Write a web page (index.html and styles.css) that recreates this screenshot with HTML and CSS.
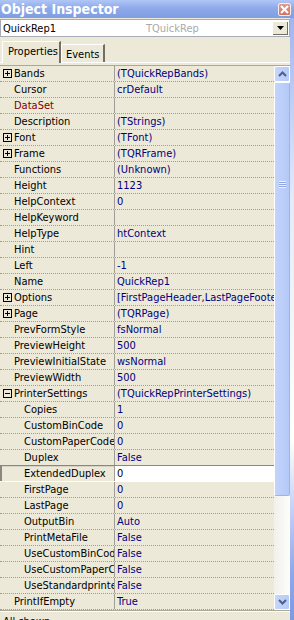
FILE: index.html
```html
<!DOCTYPE html>
<html lang="en">
<head>
    <meta charset="UTF-8">
    <meta name="viewport" content="width=device-width, initial-scale=1.0">
    <title>Object Inspector</title>
    <link rel="stylesheet" href="styles.css">
</head>
<body>
    <div class="window">
        <div class="titlebar">
            <span class="title">Object Inspector</span>
            <span class="close">
                <svg width="9" height="9" viewBox="0 0 9 9"><path d="M1 1L8 8M8 1L1 8" stroke="#fff" stroke-width="2"/></svg>
            </span>
        </div>

        <div class="main">
            <div class="content">
                <div class="combo">
                    <span class="combo-name">QuickRep1</span>
                    <span class="combo-type">TQuickRep</span>
                    <span class="combo-btn">
                        <svg width="7" height="4" viewBox="0 0 7 4"><path d="M0 0H7L3.5 4Z" fill="#000"/></svg>
                    </span>
                </div>

                <div class="tabs">
                    <div class="tab active">Properties</div>
                    <div class="tab">Events</div>
                </div>

                <div class="grid">
                    <div class="rows">
                        <div class="row"><div class="name"><span class="box plus"></span>Bands</div><div class="value">(TQuickRepBands)</div></div>
                        <div class="row"><div class="name top">Cursor</div><div class="value">crDefault</div></div>
                        <div class="row"><div class="name top ref">DataSet</div><div class="value"></div></div>
                        <div class="row"><div class="name top">Description</div><div class="value">(TStrings)</div></div>
                        <div class="row"><div class="name"><span class="box plus"></span>Font</div><div class="value">(TFont)</div></div>
                        <div class="row"><div class="name"><span class="box plus"></span>Frame</div><div class="value">(TQRFrame)</div></div>
                        <div class="row"><div class="name top">Functions</div><div class="value">(Unknown)</div></div>
                        <div class="row"><div class="name top">Height</div><div class="value">1123</div></div>
                        <div class="row"><div class="name top">HelpContext</div><div class="value">0</div></div>
                        <div class="row"><div class="name top">HelpKeyword</div><div class="value"></div></div>
                        <div class="row"><div class="name top">HelpType</div><div class="value">htContext</div></div>
                        <div class="row"><div class="name top">Hint</div><div class="value"></div></div>
                        <div class="row"><div class="name top">Left</div><div class="value">-1</div></div>
                        <div class="row"><div class="name top">Name</div><div class="value">QuickRep1</div></div>
                        <div class="row"><div class="name"><span class="box plus"></span>Options</div><div class="value">[FirstPageHeader,LastPageFooter]</div></div>
                        <div class="row"><div class="name"><span class="box plus"></span>Page</div><div class="value">(TQRPage)</div></div>
                        <div class="row"><div class="name top">PrevFormStyle</div><div class="value">fsNormal</div></div>
                        <div class="row"><div class="name top">PreviewHeight</div><div class="value">500</div></div>
                        <div class="row"><div class="name top">PreviewInitialState</div><div class="value">wsNormal</div></div>
                        <div class="row"><div class="name top">PreviewWidth</div><div class="value">500</div></div>
                        <div class="row"><div class="name"><span class="box"></span>PrinterSettings</div><div class="value">(TQuickRepPrinterSettings)</div></div>
                        <div class="row"><div class="name sub">Copies</div><div class="value">1</div></div>
                        <div class="row"><div class="name sub">CustomBinCode</div><div class="value">0</div></div>
                        <div class="row"><div class="name sub">CustomPaperCode</div><div class="value">0</div></div>
                        <div class="row before-sel"><div class="name sub">Duplex</div><div class="value">False</div></div>
                        <div class="row selected"><div class="name sub">ExtendedDuplex</div><div class="value">0</div></div>
                        <div class="row"><div class="name sub">FirstPage</div><div class="value">0</div></div>
                        <div class="row"><div class="name sub">LastPage</div><div class="value">0</div></div>
                        <div class="row"><div class="name sub">OutputBin</div><div class="value">Auto</div></div>
                        <div class="row"><div class="name sub">PrintMetaFile</div><div class="value">False</div></div>
                        <div class="row"><div class="name sub">UseCustomBinCode</div><div class="value">False</div></div>
                        <div class="row"><div class="name sub">UseCustomPaperCode</div><div class="value">False</div></div>
                        <div class="row"><div class="name sub">UseStandardprinter</div><div class="value">False</div></div>
                        <div class="row"><div class="name top">PrintIfEmpty</div><div class="value">True</div></div>
                    </div>

                    <div class="scrollbar">
                        <div class="sb-btn">
                            <svg width="9" height="6" viewBox="0 0 9 6"><path d="M1 5L4.5 1.5L8 5" fill="none" stroke="#4d6185" stroke-width="2"/></svg>
                        </div>
                        <div class="sb-thumb">
                            <span class="grip"></span>
                        </div>
                        <div class="sb-track"></div>
                        <div class="sb-btn">
                            <svg width="9" height="6" viewBox="0 0 9 6"><path d="M1 1L4.5 4.5L8 1" fill="none" stroke="#4d6185" stroke-width="2"/></svg>
                        </div>
                    </div>
                </div>

                <div class="status">All shown</div>
            </div>
            <div class="edge"></div>
        </div>
    </div>
</body>
</html>
```

FILE: styles.css
```css
body {
    margin: 0;
    font-family: "DejaVu Sans Condensed", "Liberation Sans", Arial, sans-serif;
    font-size: 11px;
    background: #ece9d8;
}
.window {
    width: 294px;
    height: 620px;
    overflow: hidden;
    background: #ece9d8;
}
.titlebar {
    height: 18px;
    display: flex;
    align-items: center;
    justify-content: space-between;
    padding: 0 3px 0 1px;
    background: linear-gradient(#b0c6f6, #8eaaea 45%, #7f9de4);
}
.title {
    color: #fff;
    font-weight: bold;
    font-size: 14px;
}
.close {
    width: 13px;
    height: 13px;
    box-sizing: border-box;
    display: flex;
    align-items: center;
    justify-content: center;
    border: 1px solid #f4f0f0;
    border-radius: 2px;
    background: linear-gradient(#e59a8e, #d5705f);
}
.main {
    display: flex;
}
.content {
    width: 290px;
}
.edge {
    width: 4px;
    height: 602px;
    background: linear-gradient(#9fb6ee, #e4eafa 30%, #ffffff 70%, #90a8ea 92%, #7e98e2);
}
.combo {
    margin-top: 1px;
    height: 18px;
    box-sizing: border-box;
    display: flex;
    align-items: center;
    background: #fff;
    border: 1px solid #a5acb5;
}
.combo-name {
    width: 143px;
    padding-left: 2px;
}
.combo-type {
    flex: 1;
    color: #aaaaaa;
}
.combo-btn {
    width: 16px;
    height: 14px;
    margin-right: 1px;
    display: flex;
    align-items: center;
    justify-content: center;
    background: #ece9d8;
    box-shadow: inset 1px 1px 0 #fff, inset -1px -1px 0 #716f64;
}
.tabs {
    display: flex;
    align-items: flex-end;
    height: 22px;
    padding: 3px 0 0 2px;
    border-bottom: 1px solid #fff;
}
.tab {
    height: 18px;
    padding: 0 3px 0 4px;
    line-height: 19px;
    box-sizing: border-box;
    border-left: 1px solid #fff;
    border-top: 1px solid #fff;
    border-right: 2px solid #716f64;
}
.tab.active {
    height: 22px;
    width: 59px;
    line-height: 20px;
    padding-left: 5px;
    margin-bottom: -1px;
    background: #ece9d8;
}
.grid {
    display: flex;
    margin-top: 2px;
    border-top: 1px solid #aca899;
}
.rows {
    width: 274px;
}
.row {
    display: flex;
    height: 16px;
    box-sizing: border-box;
    border-bottom: 1px dotted #a09e94;
    line-height: 15px;
    white-space: nowrap;
}
.name {
    width: 115px;
    flex: none;
    display: flex;
    align-items: center;
    padding-left: 3px;
    box-sizing: border-box;
    overflow: hidden;
    border-right: 1px solid #a09e94;
    color: #000;
}
.name.top {
    padding-left: 14px;
}
.name.sub {
    padding-left: 24px;
}
.name.ref {
    color: #800000;
}
.value {
    flex: 1;
    padding-left: 2px;
    overflow: hidden;
    color: #000080;
}
.box {
    width: 9px;
    height: 9px;
    flex: none;
    box-sizing: border-box;
    margin-right: 2px;
    border: 1px solid #000;
    background: linear-gradient(#000, #000) center / 5px 1px no-repeat;
}
.box.plus {
    background:
        linear-gradient(#000, #000) center / 5px 1px no-repeat,
        linear-gradient(#000, #000) center / 1px 5px no-repeat;
}
.row.before-sel {
    border-bottom: 1px solid #8a887c;
}
.row.selected {
    border-bottom: 1px solid #fff;
    box-shadow: inset 0 1px 0 #d6d3c6;
}
.row.selected .name {
    box-shadow: inset 2px 0 0 #8a887c;
}
.row.selected .value {
    background: #fff;
    color: #000;
}
.scrollbar {
    width: 16px;
    display: flex;
    flex-direction: column;
    background: linear-gradient(to right, #f1f0ea, #fdfdfb);
}
.sb-btn {
    height: 16px;
    flex: none;
    box-sizing: border-box;
    display: flex;
    align-items: center;
    justify-content: center;
    border: 1px solid #fff;
    border-radius: 2px;
    background: linear-gradient(to right, #c6d6fb, #b6cbf8);
}
.sb-thumb {
    height: 414px;
    box-sizing: border-box;
    display: flex;
    align-items: center;
    justify-content: center;
    border: 1px solid #fff;
    border-right-color: #9db3ee;
    border-bottom-color: #9db3ee;
    border-radius: 2px;
    background: linear-gradient(to right, #c3d4fb, #b4c9f8);
}
.grip {
    width: 7px;
    height: 7px;
    margin-top: -210px;
    background: repeating-linear-gradient(#eef3ff 0, #eef3ff 1px, #8ca5e4 1px, #8ca5e4 2px);
}
.sb-track {
    flex: 1;
}
.status {
    height: 10px;
    box-sizing: border-box;
    padding: 3px 0 0 3px;
    line-height: 15px;
    overflow: hidden;
    border-top: 1px solid #aca899;
    box-shadow: inset 0 1px 0 #fff;
}
```
